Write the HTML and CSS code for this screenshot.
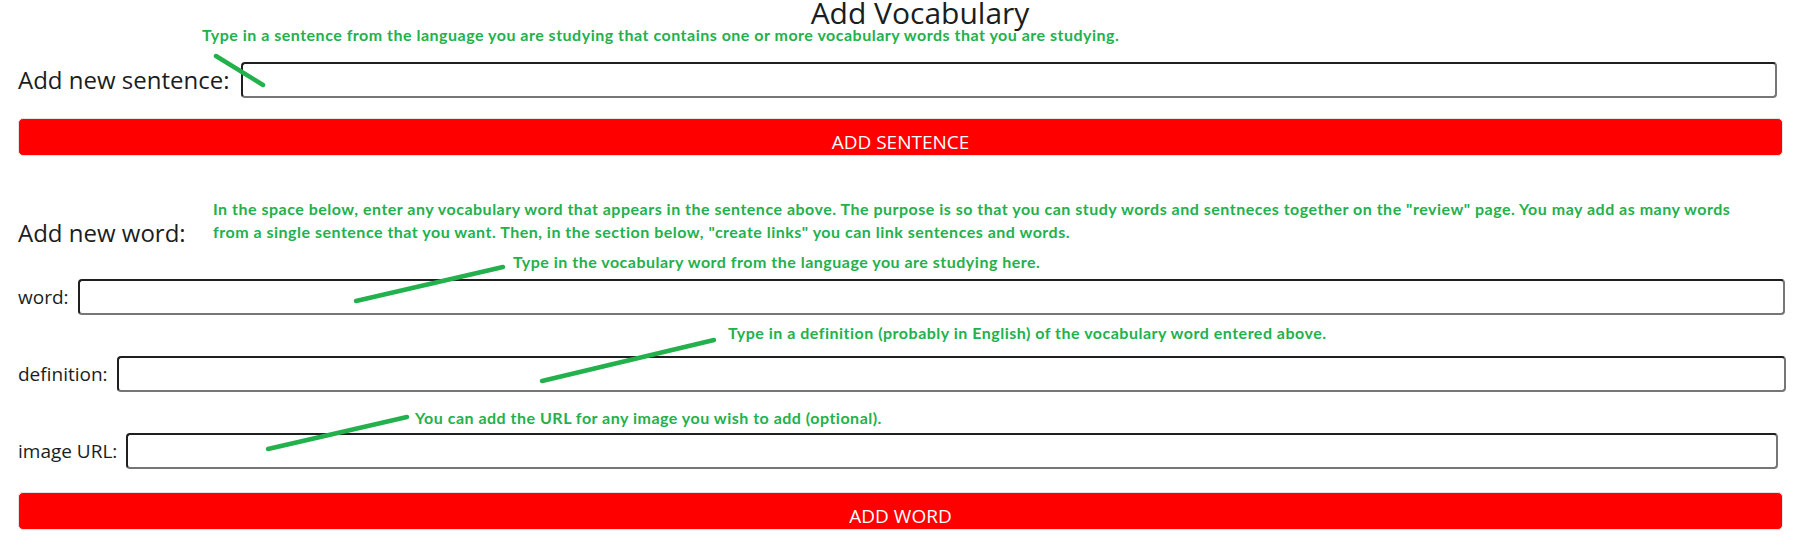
FILE: index.html
```html
<!DOCTYPE html>
<html lang="en">
<head>
<meta charset="utf-8">
<title>Add Vocabulary</title>
<link rel="stylesheet" href="styles.css">
</head>
<body>
<div class="page">
  <h1 class="title">Add Vocabulary</h1>

  <div class="row row-sentence">
    <label class="label-lg" for="sentence">Add new sentence:</label>
    <input class="field field-sentence" id="sentence" type="text">
  </div>
  <button class="btn btn-sentence" type="button">ADD SENTENCE</button>

  <h2 class="label-lg section-heading">Add new word:</h2>

  <div class="row row-word">
    <label class="label" for="word">word:</label>
    <input class="field field-word" id="word" type="text">
  </div>
  <div class="row row-def">
    <label class="label" for="definition">definition:</label>
    <input class="field field-def" id="definition" type="text">
  </div>
  <div class="row row-url">
    <label class="label" for="imageurl">image URL:</label>
    <input class="field field-url" id="imageurl" type="text">
  </div>
  <button class="btn btn-word" type="button">ADD WORD</button>

  <div class="notes">
    <p class="note note-1">Type in a sentence from the language you are studying that contains one or more vocabulary words that you are studying.</p>
    <p class="note note-2">In the space below, enter any vocabulary word that appears in the sentence above. The purpose is so that you can study words and sentneces together on the "review" page. You may add as many words<br>from a single sentence that you want. Then, in the section below, "create links" you can link sentences and words.</p>
    <p class="note note-3">Type in the vocabulary word from the language you are studying here.</p>
    <p class="note note-4">Type in a definition (probably in English) of the vocabulary word entered above.</p>
    <p class="note note-5">You can add the URL for any image you wish to add (optional).</p>
    <svg class="strokes" width="1801" height="549" viewBox="0 0 1801 549" aria-hidden="true">
      <line x1="216" y1="56" x2="263" y2="85"/>
      <line x1="356" y1="301" x2="503" y2="267"/>
      <line x1="542" y1="381" x2="714" y2="340"/>
      <line x1="268" y1="449" x2="407" y2="417"/>
    </svg>
  </div>
</div>
</body>
</html>
```

FILE: styles.css
```css
html, body {
  margin: 0;
  padding: 0;
  background: #ffffff;
}

body {
  font-family: "Open Sans", "Noto Sans", sans-serif;
  color: #1a1d21;
  overflow: hidden;
}

.page {
  position: relative;
  width: 1801px;
  height: 549px;
  box-sizing: border-box;
  padding: 0 15px 0 18px;
}

.title {
  margin: 0;
  padding-left: 36px;
  font-size: 30px;
  font-weight: 500;
  line-height: 26px;
  text-align: center;
}

.row {
  display: flex;
  align-items: center;
  height: 36px;
}

.row-sentence {
  margin-top: 36px;
  gap: 12px;
}

.row-word {
  margin-top: 31px;
  gap: 9px;
}

.row-def,
.row-url {
  margin-top: 41px;
  gap: 9px;
}

.label-lg {
  font-size: 24px;
  font-weight: 500;
  line-height: 30px;
  white-space: nowrap;
}

.label {
  font-size: 19px;
  line-height: 24px;
  white-space: nowrap;
}

.section-heading {
  margin: 62px 0 0 0;
}

.field {
  flex: 1;
  height: 36px;
  box-sizing: border-box;
  border-style: solid;
  border-width: 2px;
  border-color: #1f1f1f #767676 #767676 #1f1f1f;
  border-radius: 4px;
  background: #ffffff;
  font: inherit;
  padding: 0 6px;
  outline: none;
}

.field-sentence { margin-right: 9px; }
.field-word { margin-right: 1px; }
.field-def { margin-right: 0; }
.field-url { margin-right: 8px; }

.btn {
  display: block;
  width: calc(100% - 3px);
  height: 38px;
  box-sizing: border-box;
  border: 1px solid #e4e4e4;
  border-radius: 5px;
  background: #ff0000;
  color: #ffffff;
  font-family: "Open Sans", "Noto Sans", sans-serif;
  font-size: 19px;
  line-height: 26px;
  padding: 10px 0 0 0;
  text-align: center;
}

.btn-sentence { margin-top: 20px; }
.btn-word { margin-top: 23px; }

.notes {
  position: absolute;
  inset: 0;
  pointer-events: none;
}

.note {
  position: absolute;
  margin: 0;
  font-family: "Lato", "Open Sans", sans-serif;
  font-weight: 700;
  font-size: 16px;
  letter-spacing: 0.5px;
  line-height: 23px;
  color: #22b14c;
  white-space: nowrap;
}

.note-1 { left: 202px; top: 23px; }
.note-2 { left: 213px; top: 197px; }
.note-3 { left: 513px; top: 250px; }
.note-4 { left: 728px; top: 321px; }
.note-5 { left: 415px; top: 406px; }

.strokes {
  position: absolute;
  left: 0;
  top: 0;
}

.strokes line {
  stroke: #22b14c;
  stroke-width: 4.5;
  stroke-linecap: round;
}
```
